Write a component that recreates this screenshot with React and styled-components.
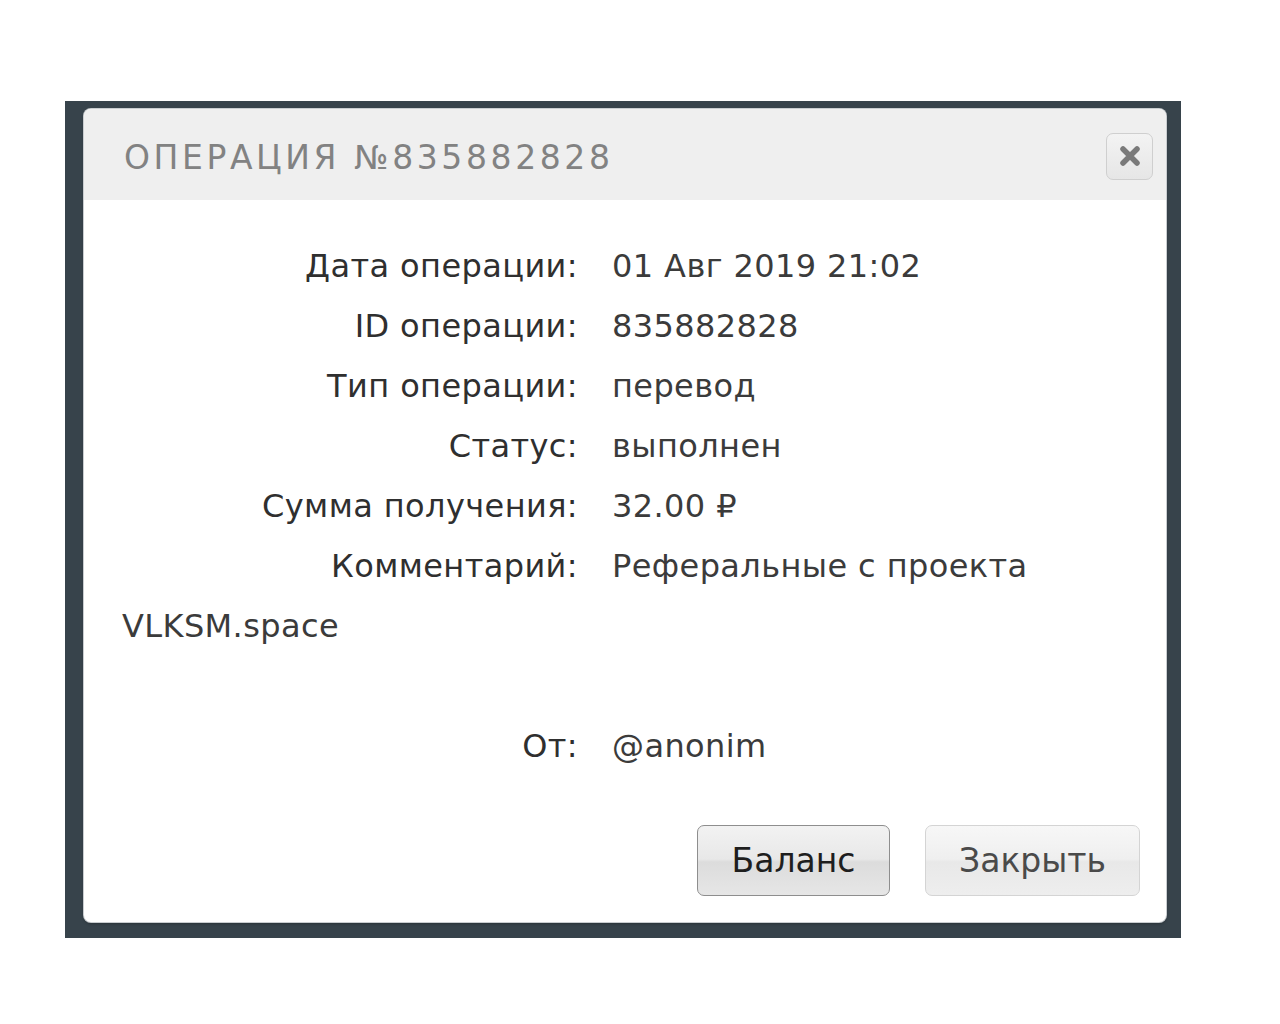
import React from "react";
import styled, { createGlobalStyle } from "styled-components";

const GlobalStyle = createGlobalStyle`
  html, body {
    margin: 0;
    padding: 0;
    background: #ffffff;
  }
  body {
    font-family: "DejaVu Sans", sans-serif;
  }
`;

const rows = [
  { label: "Дата операции:", value: "01 Авг 2019 21:02" },
  { label: "ID операции:", value: "835882828" },
  { label: "Тип операции:", value: "перевод" },
  { label: "Статус:", value: "выполнен" },
  { label: "Сумма получения:", value: "32.00 ₽" },
];

export default function App() {
  return (
    <>
      <GlobalStyle />
      <Page>
        <Backdrop>
          <Modal>
            <Header>
              <Title>Операция №835882828</Title>
              <CloseButton aria-label="close">
                <svg width="22" height="22" viewBox="0 0 22 22">
                  <path
                    d="M4 4 L18 18 M18 4 L4 18"
                    stroke="#7a7a7a"
                    strokeWidth="5.5"
                    strokeLinecap="round"
                  />
                </svg>
              </CloseButton>
            </Header>
            <Body>
              {rows.map((r) => (
                <Row key={r.label}>
                  <Label>{r.label}</Label>
                  <Value>{r.value}</Value>
                </Row>
              ))}
              <Row>
                <Label>Комментарий:</Label>
                <Value>
                  Реферальные с проекта
                  <br />
                  VLKSM.space
                </Value>
              </Row>
              <Row>&nbsp;</Row>
              <Row>
                <Label>От:</Label>
                <Value>@anonim</Value>
              </Row>
            </Body>
            <Footer>
              <Button $primary>Баланс</Button>
              <Button>Закрыть</Button>
            </Footer>
          </Modal>
        </Backdrop>
      </Page>
    </>
  );
}

const Page = styled.div`
  width: 1280px;
  height: 1024px;
  padding: 101px 0 0 65px;
  box-sizing: border-box;
`;

const Backdrop = styled.div`
  width: 1116px;
  height: 837px;
  background: #37434b;
  padding: 8px 0 0 19px;
  box-sizing: border-box;
`;

const Modal = styled.div`
  width: 1082px;
  height: 813px;
  background: #ffffff;
  border-radius: 7px;
  box-shadow: 0 0 0 1px #c9cdd0, 0 2px 3px rgba(0, 0, 0, 0.25);
  overflow: hidden;
  display: flex;
  flex-direction: column;
`;

const Header = styled.div`
  height: 91px;
  background: #efefef;
  display: flex;
  align-items: center;
  justify-content: space-between;
  padding: 0 13px 0 40px;
`;

const Title = styled.h2`
  margin: 0;
  padding-top: 5px;
  font-family: "DejaVu Sans", sans-serif;
  font-weight: 400;
  font-size: 33px;
  letter-spacing: 3.6px;
  text-transform: uppercase;
  color: #828282;
`;

const CloseButton = styled.button`
  width: 47px;
  height: 47px;
  padding: 0;
  margin-top: 3px;
  border: 1px solid #cfcfcf;
  border-radius: 7px;
  background: linear-gradient(#f3f3f3, #e6e6e6);
  display: flex;
  align-items: center;
  justify-content: center;
`;

const Body = styled.div`
  flex: 1;
  padding: 36px 38px 0 38px;
  font-family: "DejaVu Sans", sans-serif;
  font-size: 32px;
  letter-spacing: 0.4px;
  color: #333333;
`;

const Row = styled.div`
  line-height: 60px;
`;

const Label = styled.span`
  display: inline-block;
  width: 456px;
  padding-right: 34px;
  text-align: right;
  color: #2f2f2f;
  vertical-align: top;
`;

const Value = styled.span`
  color: #3b3b3b;
`;

const Footer = styled.div`
  display: flex;
  justify-content: flex-end;
  gap: 35px;
  padding: 0 26px 26px 0;
`;

const Button = styled.button`
  height: 71px;
  padding: 0 30px;
  min-width: ${(p) => (p.$primary ? "193px" : "215px")};
  font-family: "DejaVu Sans", sans-serif;
  font-size: 33px;
  color: ${(p) => (p.$primary ? "#1e1e1e" : "#4a4a4a")};
  border: 1.5px solid ${(p) => (p.$primary ? "#8e8e8e" : "#d4d4d4")};
  border-radius: 7px;
  background: ${(p) =>
    p.$primary
      ? "linear-gradient(#f2f2f2 0%, #e8e8e8 48%, #dcdcdc 52%, #e6e6e6 100%)"
      : "linear-gradient(#f7f7f7 0%, #efefef 48%, #e8e8e8 52%, #eeeeee 100%)"};
`;
